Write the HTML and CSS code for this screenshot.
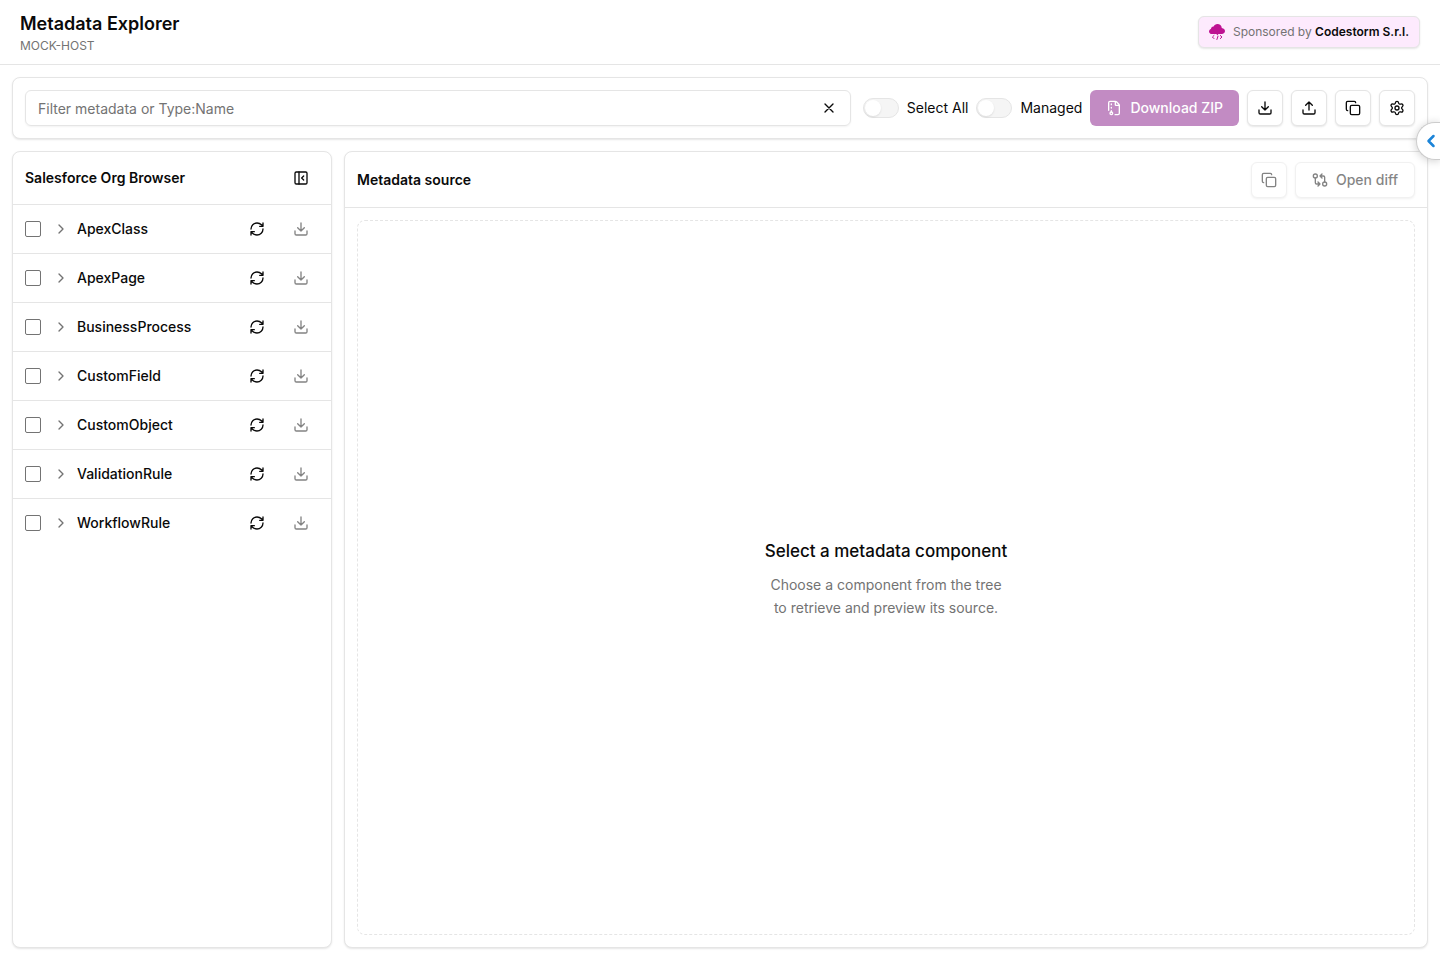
FILE: index.html
```html
<!DOCTYPE html>
<html lang="en">
<head>
    <meta charset="UTF-8">
    <meta name="viewport" content="width=device-width, initial-scale=1.0">
    <title>Metadata Explorer</title>
    <link rel="stylesheet" href="styles.css">
</head>
<body>
    <svg class="sprite" aria-hidden="true">
        <symbol id="i-x" viewBox="0 0 24 24"><path d="M18 6 6 18M6 6l12 12"/></symbol>
        <symbol id="i-download" viewBox="0 0 24 24"><path d="M12 15V3M21 15v4a2 2 0 0 1-2 2H5a2 2 0 0 1-2-2v-4M7 10l5 5 5-5"/></symbol>
        <symbol id="i-upload" viewBox="0 0 24 24"><path d="M12 3v12M17 8l-5-5-5 5M21 15v4a2 2 0 0 1-2 2H5a2 2 0 0 1-2-2v-4"/></symbol>
        <symbol id="i-copy" viewBox="0 0 24 24"><rect x="8" y="8" width="14" height="14" rx="2"/><path d="M4 16c-1.1 0-2-.9-2-2V4c0-1.1.9-2 2-2h10c1.1 0 2 .9 2 2"/></symbol>
        <symbol id="i-settings" viewBox="0 0 24 24"><path d="M9.671 4.136a2.34 2.34 0 0 1 4.659 0 2.34 2.34 0 0 0 3.319 1.915 2.34 2.34 0 0 1 2.33 4.033 2.34 2.34 0 0 0 0 3.831 2.34 2.34 0 0 1-2.33 4.033 2.34 2.34 0 0 0-3.319 1.915 2.34 2.34 0 0 1-4.659 0 2.34 2.34 0 0 0-3.32-1.915 2.34 2.34 0 0 1-2.33-4.033 2.34 2.34 0 0 0 0-3.831A2.34 2.34 0 0 1 6.35 6.051a2.34 2.34 0 0 0 3.319-1.915"/><circle cx="12" cy="12" r="3"/></symbol>
        <symbol id="i-zip" viewBox="0 0 24 24"><path d="M13.659 22H18a2 2 0 0 0 2-2V8a2.4 2.4 0 0 0-.706-1.706l-3.588-3.588A2.4 2.4 0 0 0 14 2H6a2 2 0 0 0-2 2v11.5M14 2v5a1 1 0 0 0 1 1h5M8 12v-1M8 18v-2M8 7V6"/><circle cx="8" cy="20" r="2"/></symbol>
        <symbol id="i-panel" viewBox="0 0 24 24"><rect x="3" y="3" width="18" height="18" rx="2"/><path d="M9 3v18M16 15l-3-3 3-3"/></symbol>
        <symbol id="i-chevron" viewBox="0 0 24 24"><path d="m9 18 6-6-6-6"/></symbol>
        <symbol id="i-chevron-left" viewBox="0 0 24 24"><path d="m15 18-6-6 6-6"/></symbol>
        <symbol id="i-refresh" viewBox="0 0 24 24"><path d="M3 12a9 9 0 0 1 9-9 9.75 9.75 0 0 1 6.74 2.74L21 8M21 3v5h-5M21 12a9 9 0 0 1-9 9 9.75 9.75 0 0 1-6.74-2.74L3 16M8 16H3v5"/></symbol>
        <symbol id="i-diff" viewBox="0 0 24 24"><circle cx="5" cy="6" r="3"/><path d="M12 6h5a2 2 0 0 1 2 2v7M15 9l-3-3 3-3"/><circle cx="19" cy="18" r="3"/><path d="M12 18H7a2 2 0 0 1-2-2V9M9 15l3 3-3 3"/></symbol>
    </svg>

    <header class="header">
        <div>
            <h1 class="title">Metadata Explorer</h1>
            <p class="host">MOCK-HOST</p>
        </div>
        <a class="sponsor" href="#">
            <svg class="sponsor-logo" viewBox="0 0 16 16" aria-hidden="true">
                <path fill="currentColor" d="M3 10C1.300 10 0 8.900 0 7.400 0 6.200.8 5.200 2 4.900 2 3.400 3.100 2.400 4.600 2.500 5.300.9 6.700 0 8.400 0c2.400 0 4.200 1.700 4.400 3.900C14.700 4.200 16 5.500 16 7.100c0 1.700-1.400 2.900-3.200 2.900H9.400L8.200 11.600 7.500 10Z"/>
                <path fill="none" stroke="currentColor" stroke-linecap="round" stroke-linejoin="round" d="M5 11.500 3.400 13 5 14.600M11.300 11.500l1.700 1.500-1.700 1.600M9 12.200l-1.100 3.300"/>
            </svg>
            <span>Sponsored by <strong>Codestorm S.r.l.</strong></span>
        </a>
    </header>

    <main class="main">
        <section class="card toolbar">
            <div class="search">
                <input class="search-input" type="text" placeholder="Filter metadata or Type:Name" aria-label="Filter metadata">
                <button class="search-clear" type="button" aria-label="Clear filter"><svg class="icon"><use href="#i-x"/></svg></button>
            </div>
            <div class="actions">
                <label class="switch"><input type="checkbox"><span>Select All</span></label>
                <label class="switch"><input type="checkbox"><span>Managed</span></label>
                <button class="btn btn-primary" type="button" disabled><svg class="icon"><use href="#i-zip"/></svg>Download ZIP</button>
                <button class="btn btn-icon" type="button" aria-label="Import"><svg class="icon"><use href="#i-download"/></svg></button>
                <button class="btn btn-icon" type="button" aria-label="Export"><svg class="icon"><use href="#i-upload"/></svg></button>
                <button class="btn btn-icon" type="button" aria-label="Copy"><svg class="icon"><use href="#i-copy"/></svg></button>
                <button class="btn btn-icon" type="button" aria-label="Settings"><svg class="icon"><use href="#i-settings"/></svg></button>
            </div>
        </section>

        <div class="panels">
            <aside class="card">
                <div class="browser-head">
                    <h2 class="panel-title">Salesforce Org Browser</h2>
                    <button class="ghost" type="button" aria-label="Collapse browser"><svg class="icon"><use href="#i-panel"/></svg></button>
                </div>
                <ul class="tree">
                    <li class="row">
                        <input class="check" type="checkbox" aria-label="Select ApexClass">
                        <button class="expand" type="button"><svg class="icon"><use href="#i-chevron"/></svg>ApexClass</button>
                        <button class="ghost" type="button" aria-label="Refresh ApexClass"><svg class="icon"><use href="#i-refresh"/></svg></button>
                        <button class="ghost" type="button" aria-label="Download ApexClass" disabled><svg class="icon"><use href="#i-download"/></svg></button>
                    </li>
                    <li class="row">
                        <input class="check" type="checkbox" aria-label="Select ApexPage">
                        <button class="expand" type="button"><svg class="icon"><use href="#i-chevron"/></svg>ApexPage</button>
                        <button class="ghost" type="button" aria-label="Refresh ApexPage"><svg class="icon"><use href="#i-refresh"/></svg></button>
                        <button class="ghost" type="button" aria-label="Download ApexPage" disabled><svg class="icon"><use href="#i-download"/></svg></button>
                    </li>
                    <li class="row">
                        <input class="check" type="checkbox" aria-label="Select BusinessProcess">
                        <button class="expand" type="button"><svg class="icon"><use href="#i-chevron"/></svg>BusinessProcess</button>
                        <button class="ghost" type="button" aria-label="Refresh BusinessProcess"><svg class="icon"><use href="#i-refresh"/></svg></button>
                        <button class="ghost" type="button" aria-label="Download BusinessProcess" disabled><svg class="icon"><use href="#i-download"/></svg></button>
                    </li>
                    <li class="row">
                        <input class="check" type="checkbox" aria-label="Select CustomField">
                        <button class="expand" type="button"><svg class="icon"><use href="#i-chevron"/></svg>CustomField</button>
                        <button class="ghost" type="button" aria-label="Refresh CustomField"><svg class="icon"><use href="#i-refresh"/></svg></button>
                        <button class="ghost" type="button" aria-label="Download CustomField" disabled><svg class="icon"><use href="#i-download"/></svg></button>
                    </li>
                    <li class="row">
                        <input class="check" type="checkbox" aria-label="Select CustomObject">
                        <button class="expand" type="button"><svg class="icon"><use href="#i-chevron"/></svg>CustomObject</button>
                        <button class="ghost" type="button" aria-label="Refresh CustomObject"><svg class="icon"><use href="#i-refresh"/></svg></button>
                        <button class="ghost" type="button" aria-label="Download CustomObject" disabled><svg class="icon"><use href="#i-download"/></svg></button>
                    </li>
                    <li class="row">
                        <input class="check" type="checkbox" aria-label="Select ValidationRule">
                        <button class="expand" type="button"><svg class="icon"><use href="#i-chevron"/></svg>ValidationRule</button>
                        <button class="ghost" type="button" aria-label="Refresh ValidationRule"><svg class="icon"><use href="#i-refresh"/></svg></button>
                        <button class="ghost" type="button" aria-label="Download ValidationRule" disabled><svg class="icon"><use href="#i-download"/></svg></button>
                    </li>
                    <li class="row">
                        <input class="check" type="checkbox" aria-label="Select WorkflowRule">
                        <button class="expand" type="button"><svg class="icon"><use href="#i-chevron"/></svg>WorkflowRule</button>
                        <button class="ghost" type="button" aria-label="Refresh WorkflowRule"><svg class="icon"><use href="#i-refresh"/></svg></button>
                        <button class="ghost" type="button" aria-label="Download WorkflowRule" disabled><svg class="icon"><use href="#i-download"/></svg></button>
                    </li>
                </ul>
            </aside>

            <section class="card source">
                <div class="source-head">
                    <h2 class="panel-title">Metadata source</h2>
                    <button class="btn btn-icon" type="button" aria-label="Copy source" disabled><svg class="icon"><use href="#i-copy"/></svg></button>
                    <button class="btn" type="button" disabled><svg class="icon"><use href="#i-diff"/></svg>Open diff</button>
                </div>
                <div class="source-body">
                    <div class="empty">
                        <h3 class="empty-title">Select a metadata component</h3>
                        <p class="empty-text">Choose a component from the tree to retrieve and preview its source.</p>
                    </div>
                </div>
            </section>
        </div>
    </main>

    <button class="side-tab" type="button" aria-label="Open side panel"><svg class="icon"><use href="#i-chevron-left"/></svg></button>
</body>
</html>
```
FILE: styles.css
```css
* {
    box-sizing: border-box;
}
body {
    margin: 0;
    min-height: 100vh;
    display: flex;
    flex-direction: column;
    font-family: Inter, "Liberation Sans", sans-serif;
    font-size: 14px;
    line-height: 20px;
    color: #0a0a0a;
    background-color: #fff;
}
h1, h2, h3, p, ul {
    margin: 0;
    padding: 0;
}
button, input {
    font: inherit;
    color: inherit;
}
button {
    border: none;
    background: none;
    padding: 0;
    cursor: pointer;
}
.sprite {
    position: absolute;
    width: 0;
    height: 0;
}
.icon {
    width: 16px;
    height: 16px;
    flex-shrink: 0;
    fill: none;
    stroke: currentColor;
    stroke-width: 2;
    stroke-linecap: round;
    stroke-linejoin: round;
}

/* header */
.header {
    display: flex;
    align-items: center;
    justify-content: space-between;
    padding: 10px 20px;
    border-bottom: 1px solid #e5e5e5;
}
.title {
    font-size: 18px;
    line-height: 28px;
    font-weight: 600;
}
.host {
    font-size: 12px;
    line-height: 16px;
    color: #737373;
}
.sponsor {
    display: flex;
    align-items: center;
    gap: 8px;
    height: 32px;
    padding: 0 10px;
    border: 1px solid #e5e5e5;
    border-radius: 6px;
    background-color: #fdeafd;
    box-shadow: 0 1px 2px rgba(0, 0, 0, 0.1);
    font-size: 12px;
    line-height: 16px;
    color: #737373;
    text-decoration: none;
}
.sponsor strong {
    font-weight: 600;
    color: #0a0a0a;
}
.sponsor-logo {
    width: 16px;
    height: 16px;
    color: #be1292;
}

/* layout */
.main {
    flex: 1;
    display: flex;
    flex-direction: column;
    gap: 12px;
    padding: 12px;
}
.card {
    min-width: 0;
    border: 1px solid #e5e5e5;
    border-radius: 8px;
    background-color: #fff;
    box-shadow: 0 1px 2px rgba(0, 0, 0, 0.1);
}
.toolbar {
    display: flex;
    align-items: center;
    gap: 12px;
    padding: 12px;
}
.search {
    flex: 1;
    display: flex;
    align-items: center;
    height: 36px;
    border: 1px solid #e5e5e5;
    border-radius: 6px;
    box-shadow: 0 1px 2px rgba(0, 0, 0, 0.05);
}
.search-input {
    flex: 1;
    min-width: 0;
    padding: 2px 12px 0;
    border: none;
    outline: none;
    background: none;
}
.search-input::placeholder {
    color: #737373;
    opacity: 1;
}
.search-clear {
    display: flex;
    align-items: center;
    justify-content: center;
    width: 28px;
    height: 28px;
    margin-right: 7px;
}
.actions {
    display: flex;
    align-items: center;
    gap: 8px;
}
.switch {
    display: flex;
    align-items: center;
    gap: 8px;
    white-space: nowrap;
}
.switch input {
    appearance: none;
    display: flex;
    align-items: center;
    width: 36px;
    height: 20px;
    margin: 0;
    padding: 0 1px;
    border: 1px solid #e5e5e5;
    border-radius: 10px;
    background-color: #f5f5f5;
}
.switch input::before {
    content: "";
    width: 16px;
    height: 16px;
    border-radius: 50%;
    background-color: #fff;
    box-shadow: 0 1px 2px rgba(0, 0, 0, 0.1);
}
.switch input:checked {
    background-color: #850f88;
    justify-content: flex-end;
}

/* buttons */
.btn {
    display: flex;
    align-items: center;
    justify-content: center;
    gap: 8px;
    height: 36px;
    padding: 0 16px;
    border: 1px solid #e5e5e5;
    border-radius: 6px;
    background-color: #fff;
    box-shadow: 0 1px 2px rgba(0, 0, 0, 0.1);
    font-weight: 500;
    white-space: nowrap;
}
.btn:disabled,
.ghost:disabled {
    opacity: 0.5;
    cursor: default;
}
.btn-icon {
    width: 36px;
    padding: 0;
}
.btn-primary {
    border: none;
    background-color: #861a88;
    color: #fff;
    box-shadow: none;
}
.ghost {
    display: flex;
    align-items: center;
    justify-content: center;
    width: 36px;
    height: 36px;
    border-radius: 6px;
}

/* org browser */
.panels {
    flex: 1;
    display: grid;
    grid-template-columns: 320px minmax(0, 1fr);
    gap: 12px;
}
.panel-title {
    flex: 1;
    font-size: 14px;
    line-height: 20px;
    font-weight: 600;
}
.browser-head {
    display: flex;
    align-items: center;
    padding: 8px 12px;
    border-bottom: 1px solid #e5e5e5;
}
.tree {
    list-style: none;
}
.row {
    display: flex;
    align-items: center;
    gap: 8px;
    padding: 6px 12px;
    border-bottom: 1px solid #e5e5e5;
}
.row:last-child {
    border-bottom: none;
}
.check {
    appearance: none;
    width: 16px;
    height: 16px;
    margin: 0;
    border: 1px solid #737373;
    border-radius: 2px;
    background-color: #fff;
}
.check:checked {
    background-color: #861a88;
}
.expand {
    flex: 1;
    display: flex;
    align-items: center;
    gap: 8px;
    padding: 0 4px;
    font-weight: 500;
}
.expand .icon {
    color: #737373;
}

/* source preview */
.source {
    display: flex;
    flex-direction: column;
}
.source-head {
    display: flex;
    align-items: center;
    gap: 8px;
    min-height: 56px;
    padding: 0 12px;
    border-bottom: 1px solid #e5e5e5;
}
.source-body {
    flex: 1;
    display: flex;
    padding: 12px;
}
.empty {
    flex: 1;
    display: flex;
    flex-direction: column;
    align-items: center;
    justify-content: center;
    gap: 8px;
    border: 1px dashed #e5e5e5;
    border-radius: 8px;
    text-align: center;
}
.empty-title {
    font-size: 17px;
    line-height: 28px;
    font-weight: 500;
}
.empty-text {
    max-width: 240px;
    line-height: 23px;
    color: #737373;
}

/* drawer handle hanging over the window edge */
.side-tab {
    position: fixed;
    top: 122px;
    right: 0;
    display: flex;
    align-items: center;
    justify-content: center;
    width: 24px;
    height: 38px;
    padding-left: 4px;
    border: 1px solid #ccc;
    border-right: none;
    border-radius: 19px 0 0 19px;
    background-color: #fff;
    box-shadow: 0 1px 8px rgba(0, 0, 0, 0.2);
    color: #1b84d8;
}
.side-tab .icon {
    width: 20px;
    height: 20px;
    stroke-width: 3;
}
```
